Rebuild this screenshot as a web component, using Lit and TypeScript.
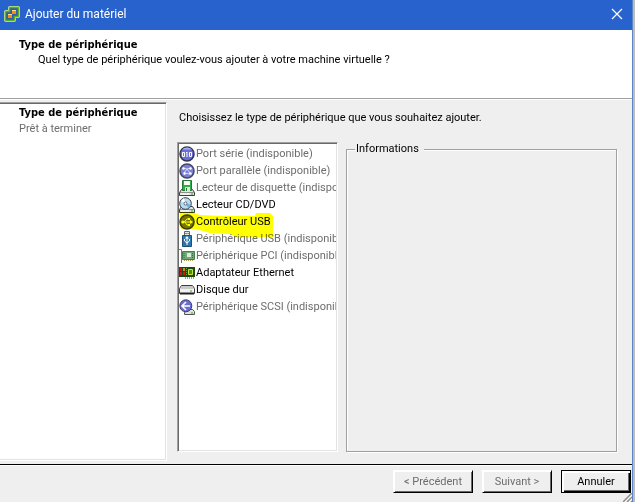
import { LitElement, html, svg, css } from "lit";
import { customElement } from "lit/decorators.js";
import { classMap } from "lit/directives/class-map.js";

const drive = svg`<path d="M2.500 9.500h11l2 3v3H.5v-3z" fill="#dfe2df" stroke="#3c3c3c"/><path d="M1 12.500h14" stroke="#8c8f8c"/><path d="M2 14h8" stroke="#fff"/><path d="M12 14h2" stroke="#18b818"/>`;

const icons: Record<string, unknown> = {
  serial: svg`<circle cx="8" cy="8" r="7" fill="#6a6fd8" stroke="#34364e" stroke-width="1.500"/><path d="M3 3.500a7 7 0 0 1 10 0z" fill="#a9acf0"/><path d="M3.500 6.500h2v4h-2zM8 6v5M10.500 6.500h2v4h-2zM7 6.500h1" fill="none" stroke="#fff"/>`,
  parallel: svg`<circle cx="8" cy="8" r="7" fill="#7b7fd8" stroke="#454760" stroke-width="1.500"/><path d="M4 5l4 1 3 4M5 10l3-4 4-1M5 10l6 1" fill="none" stroke="#d8daff"/><circle cx="4.500" cy="5.500" r="1.200" fill="#fff"/><circle cx="11.500" cy="5.500" r="1.200" fill="#fff"/><circle cx="5.500" cy="10.500" r="1.200" fill="#fff"/><circle cx="11.500" cy="10.500" r="1.200" fill="#fff"/>`,
  floppy: svg`${drive}<path d="M3.500 .5h9v10h-9z" fill="#2fae45" stroke="#287436"/><path d="M5 1h6v4H5z" fill="#f4fcf4"/><path d="M6 7h5v4H6z" fill="#dcecdc"/><path d="M7 8h1v3H7z" fill="#287436"/>`,
  optical: svg`${drive}<circle cx="6.500" cy="6.500" r="5.800" fill="#b9dbf2" stroke="#343c48"/><path d="M6.500 6.500L2 4l3-3z" fill="#fff"/><path d="M6.500 6.500l5 1-2 4z" fill="#6eaee0"/><circle cx="6.500" cy="6.500" r="1.500" fill="#fff" stroke="#567"/>`,
  usb: svg`<circle cx="8" cy="8" r="7" fill="#77774c" stroke="#3c3c30" stroke-width="1.500"/><path d="M3 8h9M5 8l3-3h2M6 8l2 3h2" fill="none" stroke="#fff"/><circle cx="3.800" cy="8" r="1.500" fill="#fff"/><path d="M11 6l3 2-3 2zM9 4h2v2H9zM9 10h2v2H9z" fill="#fff"/>`,
  stick: svg`<path d="M5.500 .5h5v4h-5z" fill="#e4e8ec" stroke="#666"/><path d="M7 2v1M9 2v1" stroke="#333"/><path d="M3.500 4.500h9v11h-9z" fill="#2b76ac" stroke="#1e4f78"/><path d="M8 6v8M5.500 8v2L8 12l2.500-2V8" fill="none" stroke="#fff"/><path d="M6 7.500L8 5l2 2.500z" fill="#fff"/>`,
  pci: svg`<path d="M0 1.500h2.500V15" fill="none" stroke="#777"/><path d="M3.500 3.500h12v8h-12z" fill="#72a878" stroke="#477d50"/><path d="M8 5h4v4H8z" fill="#d8ecd8"/><path d="M5 5v5M13.500 5v5" stroke="#356b40" stroke-dasharray="1 1"/><path d="M5 12.500h9" stroke="#a99c50" stroke-dasharray="1 1"/>`,
  nic: svg`<path d="M0 2h16v10H0z" fill="#174c17"/><path d="M1 3h2v3H1zM1 7h2v3H1zM4 7h2v3H4z" fill="#c81818"/><path d="M4 3h2v3H4z" fill="#e08418"/><path d="M9.500 4.500h4v5h-4z" fill="#4c8b20" stroke="#d0e030"/><path d="M7.500 3v7" stroke="#58a838" stroke-dasharray="1 1"/><path d="M6 13h9" stroke="#c9a800" stroke-width="2" stroke-dasharray="1 1"/>`,
  disk: svg`<path d="M2.500 3.500h11l2 3v5H.5v-5z" fill="#f2f2f2" stroke="#3e3e3e"/><path d="M3 4h10l2 3H1z" fill="#cacaca"/><path d="M1 11.500h14" stroke="#222" stroke-width="2"/><path d="M11 9h2" stroke="#18b818"/>`,
  scsi: svg`<path d="M9.500 10.500h4l2 2v3h-10v-2z" fill="#dfe2df" stroke="#555"/><path d="M12 14h2" stroke="#18b818"/><circle cx="6.800" cy="6.800" r="6" fill="#6a6ed2" stroke="#3c3e70"/><path d="M7 3L3 7l4 4M4 7h7" fill="none" stroke="#fff" stroke-width="1.600"/>`,
};

const devices = [
  { icon: "serial", label: "Port série (indisponible)", off: true },
  { icon: "parallel", label: "Port parallèle (indisponible)", off: true },
  { icon: "floppy", label: "Lecteur de disquette (indisponible)", off: true },
  { icon: "optical", label: "Lecteur CD/DVD", off: false },
  { icon: "usb", label: "Contrôleur USB", off: false },
  { icon: "stick", label: "Périphérique USB (indisponible)", off: true },
  { icon: "pci", label: "Périphérique PCI (indisponible)", off: true },
  { icon: "nic", label: "Adaptateur Ethernet", off: false },
  { icon: "disk", label: "Disque dur", off: false },
  { icon: "scsi", label: "Périphérique SCSI (indisponible)", off: true },
];

@customElement("app-root")
export class AppRoot extends LitElement {
  static styles = css`
    :host { display: block; height: 100vh; font: 11px/14px Roboto, "DejaVu Sans Condensed", sans-serif; color: #000; }
    * { box-sizing: border-box; }
    h1, h2, p, ul { margin: 0; padding: 0; font-size: inherit; }
    svg { display: block; flex: none; }
    .desktop { display: flex; height: 100%; background: #bdbdbd; padding-right: 2px; }
    .window { position: relative; flex: 1; min-width: 0; display: flex; flex-direction: column; background: #efefef; border-right: 1px solid #5b84c4; }
    .titlebar { display: flex; align-items: center; height: 30px; padding: 0 9px 2px 4px; gap: 5px; background: #2862cd; color: #fff; }
    .titlebar h1 { flex: 1; font: 12px/16px Roboto, "Open Sans", sans-serif; }
    .close { border: 0; padding: 0; background: none; color: #fff; }
    .banner { height: 70px; padding: 8px 19px; background: #fff; border-bottom: 1px solid #fff; box-shadow: inset 0 -1px #a0a0a0; }
    .banner p { padding: 1px 19px; }
    .banner h2, .current { font-family: "DejaVu Sans Condensed", "DejaVu Sans", sans-serif; font-weight: bold; }
    .body { flex: 1; min-height: 0; display: flex; gap: 10px; padding: 2px 15px 3px 0; }
    .steps { width: 167px; list-style: none; background: #fff; border: 1px solid; border-color: #a0a0a0 #fff #fff; border-left: 0; box-shadow: inset 0 1px #696969, inset -1px -1px #e3e3e3; padding: 3px 19px; }
    .steps li { padding-bottom: 2px; }
    .off { color: #6d6d6d; }
    .content { flex: 1; min-width: 0; display: flex; flex-direction: column; gap: 17px; padding: 9px 0; }
    .content > p { padding-left: 2px; }
    .choice { flex: 1; min-height: 0; display: flex; gap: 8px; }
    .list { position: relative; width: 161px; overflow: hidden; background: #fff; list-style: none; border: 1px solid; border-color: #a0a0a0 #fff #fff #a0a0a0; box-shadow: inset 1px 1px #696969, inset -1px -1px #e3e3e3; padding: 2px 1px; }
    .device { display: flex; align-items: center; gap: 1px; height: 17px; white-space: nowrap; overflow: hidden; }
    .mark { position: absolute; left: 0; top: 68px; mix-blend-mode: multiply; pointer-events: none; }
    .info { flex: 1; min-width: 0; margin: 0; padding: 0 8px; border: 1px solid #a0a0a0; box-shadow: 1px 1px #fff, inset 1px 1px #fff; }
    .info legend { padding: 0 5px 0 1px; background: #efefef; }
    .footer { display: flex; justify-content: flex-end; gap: 9px; padding: 5px 1px 9px; border-top: 1px solid #000; box-shadow: inset 0 1px #fff; }
    .button { width: 70px; height: 23px; padding: 0; font: inherit; background: #efefef; border: 1px solid; border-color: #fff #000 #000 #fff; box-shadow: inset 1px 1px #fff, inset -1px -1px #696969; color: #000; }
    .button:disabled { color: #6d6d6d; }
    .back { width: 80px; }
    .default { border-color: #000; box-shadow: inset 1px 1px #fff, inset 2px 2px #fff, inset -1px -1px #000, inset -2px -2px #696969; }
    .grip { position: absolute; right: 0; bottom: 0; }
  `;

  render() {
    return html`<div class="desktop"><main class="window">
      <header class="titlebar">
        <svg width="16" height="16" viewBox="0 0 16 16" fill="none"><path d="M6 1h8q1 0 1 1v8q0 1-1 1h-3v3q0 1-1 1H2q-1 0-1-1V6q0-1 1-1h3V2q0-1 1-1z" fill="#2c5fa8" stroke="#c4e69a" stroke-width="2"/><path d="M6.500 1.500h7q1 0 1 1v7q0 1-1 1h-3v3q0 1-1 1h-7q-1 0-1-1v-7q0-1 1-1h3v-3q0-1 1-1z" stroke="#5fae1c" stroke-width="1.500"/><path d="M8 4h4v4H8zM4 8h4v4H4z" fill="#fb8c0c"/><path d="M8 4h4v1H8zM4 8h4v1H4z" fill="#ffe08a"/></svg>
        <h1>Ajouter du matériel</h1>
        <button class="close" aria-label="Fermer"><svg width="12" height="12" viewBox="0 0 12 12"><path d="M1 1l10 10M11 1L1 11" stroke="#fff" fill="none" stroke-width="1.200"/></svg></button>
      </header>
      <section class="banner"><h2>Type de périphérique</h2><p>Quel type de périphérique voulez-vous ajouter à votre machine virtuelle ?</p></section>
      <div class="body">
        <ul class="steps"><li class="current">Type de périphérique</li><li class="off">Prêt à terminer</li></ul>
        <section class="content"><p>Choisissez le type de périphérique que vous souhaitez ajouter.</p>
          <div class="choice">
            <ul class="list">${devices.map((d) => html`<li class=${classMap({ device: true, off: d.off })}><svg width="16" height="16" viewBox="0 0 16 16">${icons[d.icon]}</svg><span>${d.label}</span></li>`)}
              <svg class="mark" width="100" height="30" viewBox="0 0 100 30"><path d="M2 1h12l8 3 22 1h33l1-3h14l3 3v21H58l-6-3-20-1-14-4H3l-1-4z" fill="#ff0"/></svg>
            </ul>
            <fieldset class="info"><legend>Informations</legend></fieldset>
          </div>
        </section>
      </div>
      <footer class="footer"><button class="button back" disabled>&lt; Précédent</button><button class="button" disabled>Suivant &gt;</button><button class="button default">Annuler</button></footer>
      <svg class="grip" width="9" height="9" viewBox="0 0 9 9"><path d="M0 9l9-9M4 9l5-5M8 9l1-1" stroke="#8c8c8c" stroke-width="1.500"/><path d="M2 9l7-7M6 9l3-3" stroke="#fff"/></svg>
    </main></div>`;
  }
}
